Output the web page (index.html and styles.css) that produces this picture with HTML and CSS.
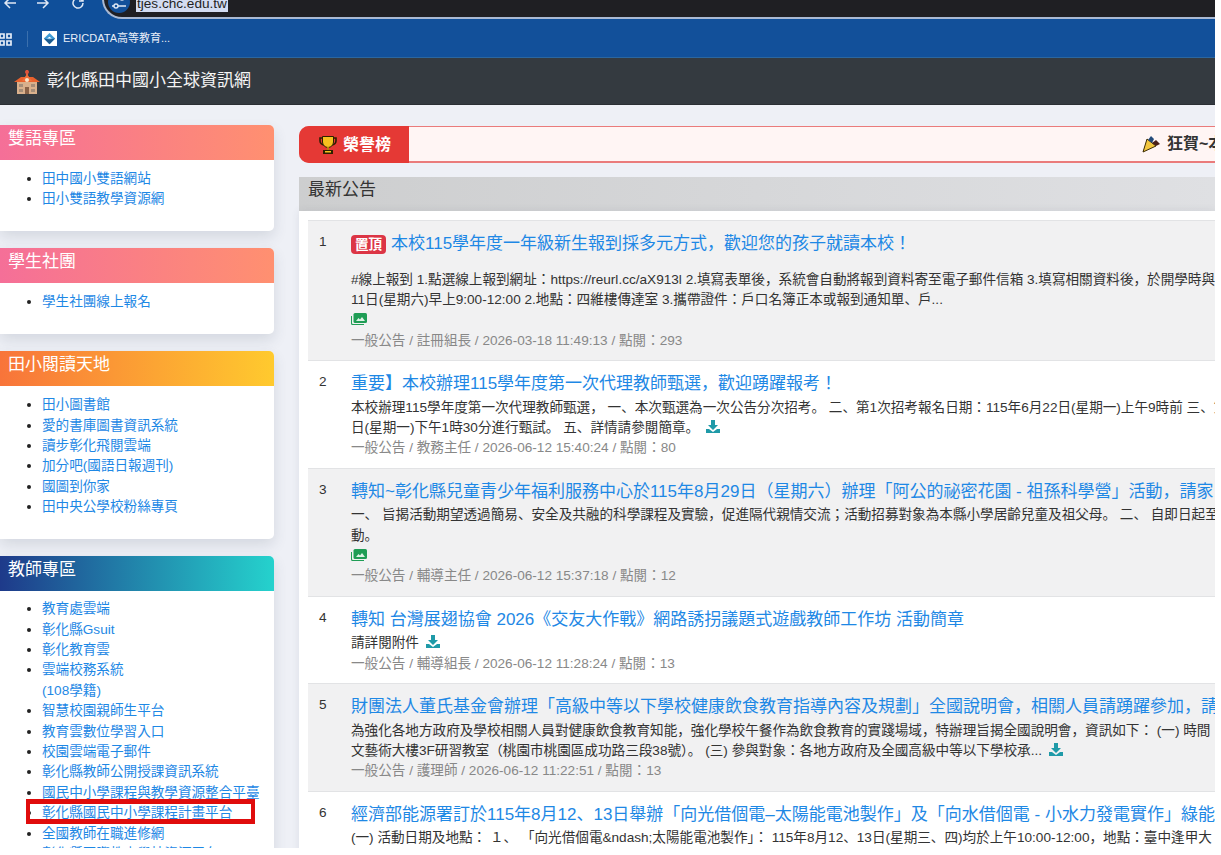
FILE: index.html
```html
<!DOCTYPE html>
<html lang="zh-Hant">
<head>
    <meta charset="utf-8">
    <title>彰化縣田中國小全球資訊網</title>
    <link rel="stylesheet" href="styles.css">
</head>
<body>
    <div class="shot">
        <!-- browser toolbar -->
        <div class="toolbar">
            <svg class="nav-icon back" viewBox="0 0 16 16"><path d="M14 8H3M8 3L3 8l5 5"/></svg>
            <svg class="nav-icon forward" viewBox="0 0 16 16"><path d="M2 8h11M8 3l5 5-5 5"/></svg>
            <svg class="nav-icon reload" viewBox="0 0 16 16"><path d="M13 8a5 5 0 1 1-1.500-3.500L13 6M13 2v4H9"/></svg>
            <div class="omnibox">
                <span class="site-icon">
                    <svg viewBox="0 0 16 16"><path d="M1 4h8M13 4h2M1 12h2M7 12h8"/><circle cx="11" cy="4" r="2"/><circle cx="5" cy="12" r="2"/></svg>
                </span>
                <span class="url">tjes.chc.edu.tw</span>
            </div>
        </div>
        <div class="bookmarks">
            <svg class="apps" viewBox="0 0 14 13"><path d="M1 1h4v4H1zM8 1h4v4H8zM1 8h4v4H1zM8 8h4v4H8z"/></svg>
            <span class="bm-sep"></span>
            <svg class="favicon" viewBox="0 0 16 16"><rect width="16" height="16" fill="#fff"/><path d="M8 2l6 6-6 6-6-6z" fill="#3f9bd6"/><path d="M2 8l6 1 6-1-6 6z" fill="#1c5a8e"/><path d="M8 6l2.500 2H5.500z" fill="#fff"/></svg>
            <span class="bm-text">ERICDATA高等教育...</span>
        </div>

        <nav class="navbar">
            <svg class="school" viewBox="0 0 26 24">
                <rect x="12" y="0" width="2" height="5" fill="#e2543a"/>
                <circle cx="13" cy="2" r="2" fill="#e2543a"/>
                <rect x="3" y="11" width="20" height="13" fill="#d9b08c"/>
                <path d="M0 12L7 7h12l7 5z" fill="#e8612c"/>
                <path d="M8 11l5-7 5 7z" fill="#ef6f3a"/>
                <circle cx="13" cy="10" r="2" fill="#f6e3c8"/>
                <rect x="11" y="17" width="4" height="7" fill="#8a6248"/>
                <path d="M5 14h4v3H5zM17 14h4v3h-4zM5 19h4v3H5zM17 19h4v3h-4z" fill="#a58d78"/>
            </svg>
            <span class="brand">彰化縣田中國小全球資訊網</span>
        </nav>

        <div class="layout">
            <aside class="sidebar">
                <section class="card">
                    <h3 class="card-title pink">雙語專區</h3>
                    <ul class="links">
                        <li><a href="#">田中國小雙語網站</a></li>
                        <li><a href="#">田小雙語教學資源網</a></li>
                    </ul>
                </section>
                <section class="card">
                    <h3 class="card-title pink">學生社團</h3>
                    <ul class="links">
                        <li><a href="#">學生社團線上報名</a></li>
                    </ul>
                </section>
                <section class="card">
                    <h3 class="card-title orange">田小閱讀天地</h3>
                    <ul class="links">
                        <li><a href="#">田小圖書館</a></li>
                        <li><a href="#">愛的書庫圖書資訊系統</a></li>
                        <li><a href="#">讀步彰化飛閱雲端</a></li>
                        <li><a href="#">加分吧(國語日報週刊)</a></li>
                        <li><a href="#">國圖到你家</a></li>
                        <li><a href="#">田中央公學校粉絲專頁</a></li>
                    </ul>
                </section>
                <section class="card">
                    <h3 class="card-title blue">教師專區</h3>
                    <ul class="links">
                        <li><a href="#">教育處雲端</a></li>
                        <li><a href="#">彰化縣Gsuit</a></li>
                        <li><a href="#">彰化教育雲</a></li>
                        <li><a href="#">雲端校務系統<br>(108學籍)</a></li>
                        <li><a href="#">智慧校園親師生平台</a></li>
                        <li><a href="#">教育雲數位學習入口</a></li>
                        <li><a href="#">校園雲端電子郵件</a></li>
                        <li><a href="#">彰化縣教師公開授課資訊系統</a></li>
                        <li><a href="#">國民中小學課程與教學資源整合平臺</a></li>
                        <li class="marked"><a href="#">彰化縣國民中小學課程計畫平台</a></li>
                        <li><a href="#">全國教師在職進修網</a></li>
                        <li><a href="#">彰化縣國際教育學校資源平台</a></li>
                    </ul>
                </section>
            </aside>

            <main class="content">
                <div class="honor">
                    <div class="honor-label">
                        <svg class="trophy" viewBox="0 0 18 18">
                            <path d="M4 2H1v3c0 2 2 4 4 4M14 2h3v3c0 2-2 4-4 4" fill="none" stroke="#2e2000" stroke-width="1.600"/>
                            <path d="M3.500 .5h11v5.500c0 3-2.500 5.500-5.500 5.500S3.500 9 3.500 6z" fill="#f7c11e" stroke="#2e2000"/>
                            <path d="M8 11h2v3H8z" fill="#b97f0c"/>
                            <path d="M4 14h10v4H4z" fill="#2e2000"/>
                            <path d="M6 15h6v1.500H6z" fill="#f7c11e"/>
                        </svg>
                        <span>榮譽榜</span>
                    </div>
                    <div class="honor-track">
                        <svg class="popper" viewBox="0 0 18 18">
                            <path d="M5 4l9 7-13 6z" fill="#f3c63f" stroke="#3a2a00"/>
                            <path d="M6 5l3-4 3 3-2 4z" fill="#234a7a"/>
                            <path d="M10 8l4-3 4 4-4 2z" fill="#4a2018"/>
                        </svg>
                        <span>狂賀~本校學生榮獲佳績</span>
                    </div>
                </div>

                <h2 class="panel-title">最新公告</h2>
                <div class="panel">
                    <article class="item shaded pinned">
                        <div class="num">1</div>
                        <div class="body">
                            <div class="title"><span class="badge">置頂</span><a href="#">本校115學年度一年級新生報到採多元方式，歡迎您的孩子就讀本校！</a></div>
                            <div class="line">#線上報到 1.點選線上報到網址：https://reurl.cc/aX913l 2.填寫表單後，系統會自動將報到資料寄至電子郵件信箱 3.填寫相關資料後，於開學時與</div>
                            <div class="line">11日(星期六)早上9:00-12:00 2.地點：四維樓傳達室 3.攜帶證件：戶口名簿正本或報到通知單、戶...</div>
                            <div class="line"><svg class="ico-img" viewBox="0 0 16 12"><path d="M4 0h10.500A1.500 1.500 0 0 1 16 1.500v7a1.500 1.500 0 0 1-1.500 1.500H4a1.500 1.500 0 0 1-1.500-1.500v-7A1.500 1.500 0 0 1 4 0z" fill="#1f9d55"/><path d="M5 8l2.500-3 1.500 1.500L11 4l3 4z" fill="#dff3e6"/><path d="M0 3v7.500A1.500 1.500 0 0 0 1.500 12H13v-1H2a1 1 0 0 1-1-1V3z" fill="#1f9d55"/></svg></div>
                            <div class="meta">一般公告 / 註冊組長 / 2026-03-18 11:49:13 / 點閱：293</div>
                        </div>
                    </article>
                    <article class="item">
                        <div class="num">2</div>
                        <div class="body">
                            <div class="title"><a href="#">重要】本校辦理115學年度第一次代理教師甄選，歡迎踴躍報考！</a></div>
                            <div class="line">本校辦理115學年度第一次代理教師甄選， 一、本次甄選為一次公告分次招考。 二、第1次招考報名日期：115年6月22日(星期一)上午9時前 三、第</div>
                            <div class="line">日(星期一)下午1時30分進行甄試。 五、詳情請參閱簡章。 <svg class="ico-dl" viewBox="0 0 14 13"><path d="M5 0h4v5h3L7 10 2 5h3z"/><path d="M0 9h3l4 3 4-3h3v4H0z"/></svg></div>
                            <div class="meta">一般公告 / 教務主任 / 2026-06-12 15:40:24 / 點閱：80</div>
                        </div>
                    </article>
                    <article class="item shaded">
                        <div class="num">3</div>
                        <div class="body">
                            <div class="title"><a href="#">轉知~彰化縣兒童青少年福利服務中心於115年8月29日（星期六）辦理「阿公的祕密花園 - 祖孫科學營」活動，請家</a></div>
                            <div class="line">一、 旨揭活動期望透過簡易、安全及共融的科學課程及實驗，促進隔代親情交流；活動招募對象為本縣小學居齡兒童及祖父母。 二、 自即日起至</div>
                            <div class="line">動。</div>
                            <div class="line"><svg class="ico-img" viewBox="0 0 16 12"><path d="M4 0h10.500A1.500 1.500 0 0 1 16 1.500v7a1.500 1.500 0 0 1-1.500 1.500H4a1.500 1.500 0 0 1-1.500-1.500v-7A1.500 1.500 0 0 1 4 0z" fill="#1f9d55"/><path d="M5 8l2.500-3 1.500 1.500L11 4l3 4z" fill="#dff3e6"/><path d="M0 3v7.500A1.500 1.500 0 0 0 1.500 12H13v-1H2a1 1 0 0 1-1-1V3z" fill="#1f9d55"/></svg></div>
                            <div class="meta">一般公告 / 輔導主任 / 2026-06-12 15:37:18 / 點閱：12</div>
                        </div>
                    </article>
                    <article class="item">
                        <div class="num">4</div>
                        <div class="body">
                            <div class="title"><a href="#">轉知 台灣展翅協會 2026《交友大作戰》網路誘拐議題式遊戲教師工作坊 活動簡章</a></div>
                            <div class="line">請詳閱附件 <svg class="ico-dl" viewBox="0 0 14 13"><path d="M5 0h4v5h3L7 10 2 5h3z"/><path d="M0 9h3l4 3 4-3h3v4H0z"/></svg></div>
                            <div class="meta">一般公告 / 輔導組長 / 2026-06-12 11:28:24 / 點閱：13</div>
                        </div>
                    </article>
                    <article class="item shaded">
                        <div class="num">5</div>
                        <div class="body">
                            <div class="title"><a href="#">財團法人董氏基金會辦理「高級中等以下學校健康飲食教育指導內容及規劃」全國說明會，相關人員請踴躍參加，請</a></div>
                            <div class="line">為強化各地方政府及學校相關人員對健康飲食教育知能，強化學校午餐作為飲食教育的實踐場域，特辦理旨揭全國說明會，資訊如下： (一) 時間：</div>
                            <div class="line">文藝術大樓3F研習教室（桃園市桃園區成功路三段38號）。 (三) 參與對象：各地方政府及全國高級中等以下學校承... <svg class="ico-dl" viewBox="0 0 14 13"><path d="M5 0h4v5h3L7 10 2 5h3z"/><path d="M0 9h3l4 3 4-3h3v4H0z"/></svg></div>
                            <div class="meta">一般公告 / 護理師 / 2026-06-12 11:22:51 / 點閱：13</div>
                        </div>
                    </article>
                    <article class="item">
                        <div class="num">6</div>
                        <div class="body">
                            <div class="title"><a href="#">經濟部能源署訂於115年8月12、13日舉辦「向光借個電–太陽能電池製作」及「向水借個電 - 小水力發電實作」綠能</a></div>
                            <div class="line">(一) 活動日期及地點： １、 「向光借個電&amp;ndash;太陽能電池製作」： 115年8月12、13日(星期三、四)均於上午10:00-12:00，地點：臺中逢甲大</div>
                        </div>
                    </article>
                </div>
            </main>
        </div>
    </div>
</body>
</html>
```

FILE: styles.css
```css
body {
    margin: 0;
    background-color: white;
    font-family: "Liberation Sans", "Noto Sans CJK JP", "Noto Sans CJK TC", sans-serif;
    /* keep the low-left commas and colons of the reference */
    font-feature-settings: "locl" 0;
    font-size: 13.6px;
    line-height: 1.5;
    color: #333;
}

a {
    color: #1e88e5;
    text-decoration: none;
}

/* the screenshot stops short of the window on the right and at the bottom */
.shot {
    width: 1215px;
    height: 848px;
    overflow: hidden;
    background-color: #eef0f6;
}

.toolbar {
    height: 20px;
    display: flex;
    align-items: flex-end;
    background-color: #0f4f9a;
    overflow: hidden;
}

.nav-icon {
    width: 16px;
    height: 16px;
    flex: none;
    margin-bottom: 9px;
    fill: none;
    stroke: #dfe8f5;
    stroke-width: 1.5;
}

.back { margin-left: 2px; }
.forward { margin-left: 17px; }
.reload { margin-left: 19px; }

.omnibox {
    flex: none;
    width: 1140px;
    height: 40px;
    margin-left: 16px;
    margin-bottom: 1px;
    padding-left: 4px;
    box-sizing: border-box;
    display: flex;
    align-items: flex-end;
    background-color: #1f1f23;
    border: 2px solid #a9b9d3;
    border-right: none;
    border-radius: 22px 0 0 22px;
}

.site-icon {
    width: 22px;
    height: 22px;
    flex: none;
    margin-bottom: 4px;
    display: flex;
    align-items: center;
    justify-content: center;
    background-color: #12509a;
    border-radius: 50%;
}

.site-icon svg {
    width: 16px;
    height: 16px;
    fill: none;
    stroke: #dfe8f5;
    stroke-width: 1.4;
}

.url {
    margin-left: 6px;
    margin-bottom: 5px;
    padding: 0 1px;
    font-size: 13.6px;
    line-height: 16px;
    color: #1f1f23;
    background-color: #d3dcf2;
}

.bookmarks {
    height: 37px;
    display: flex;
    align-items: center;
    background-color: #12509a;
    border-bottom: 1px solid #2b669f;
}

.apps {
    width: 14px;
    height: 13px;
    margin-left: -1px;
    margin-top: 1px;
    fill: none;
    stroke: #e6edf7;
    stroke-width: 1.7;
}

.bm-sep {
    width: 1px;
    height: 16px;
    margin-left: 14px;
    background-color: #3b70ad;
}

.favicon {
    width: 15px;
    height: 15px;
    margin-left: 14px;
}

.bm-text {
    margin-left: 6px;
    font-size: 11px;
    color: #e8eef8;
}

.navbar {
    height: 46px;
    display: flex;
    align-items: center;
    padding-left: 14px;
    background-color: #343a40;
    border-bottom: 1px solid #2b2f34;
}

.school {
    width: 26px;
    height: 24px;
    margin-top: 2px;
}

.brand {
    margin-left: 7px;
    font-size: 17px;
    color: #f4f4f4;
}

.layout {
    display: flex;
    gap: 25px;
    padding-top: 20px;
}

.sidebar {
    width: 274px;
    flex: none;
    display: flex;
    flex-direction: column;
    gap: 17px;
}

.card {
    background-color: white;
    border-radius: 0 5px 5px 0;
    box-shadow: 0 6px 14px rgba(60,70,90,0.14);
}

.card-title {
    height: 35px;
    margin: 0;
    padding: 0 8px;
    box-sizing: border-box;
    font-size: 17px;
    font-weight: normal;
    line-height: 28px;
    color: white;
    border-radius: 0 5px 0 0;
}

.pink { background: linear-gradient(90deg, #f56f98, #ff9070); }
.orange { background: linear-gradient(90deg, #f8743a, #ffca2e); }
.blue { background: linear-gradient(90deg, #1e3a8a, #25d2cd); }

.links {
    margin: 0;
    padding: 9px 0 21.5px 42px;
    line-height: 20.4px;
}

.card:last-child .links {
    padding-top: 8px;
}

.links li::marker {
    color: #222;
}

.marked {
    position: relative;
}

.marked::after {
    content: "";
    position: absolute;
    left: -16px;
    top: -4px;
    width: 229px;
    height: 25px;
    box-sizing: border-box;
    border: 5px solid #e00c0c;
    border-left-width: 4px;
    border-right-width: 4px;
}

.content {
    flex: 1;
    min-width: 0;
    padding-top: 1px;
}

.honor {
    height: 37px;
    margin-bottom: 14px;
    display: flex;
    box-sizing: border-box;
    background-color: #fff5f4;
    border: 1px solid #ea7b7b;
    border-right: none;
    border-bottom-width: 2px;
    border-radius: 10px 0 0 10px;
}

.honor-label {
    width: 110px;
    flex: none;
    margin: -1px 0 -2px -1px;
    display: flex;
    align-items: center;
    gap: 6px;
    padding-left: 20px;
    box-sizing: border-box;
    background-color: #e53935;
    border-radius: 10px 0 0 10px;
    font-size: 16px;
    font-weight: bold;
    color: white;
}

.trophy, .popper {
    width: 18px;
    height: 18px;
    flex: none;
}

.honor-track {
    flex: 1;
    display: flex;
    align-items: center;
    gap: 7px;
    padding-left: 733px;
    white-space: nowrap;
    overflow: hidden;
    font-size: 16px;
    font-weight: bold;
    color: #333;
}

.panel-title {
    height: 34px;
    margin: 0;
    padding: 0 9px;
    box-sizing: border-box;
    font-size: 17px;
    font-weight: normal;
    line-height: 25px;
    color: #333;
    background: linear-gradient(90deg, #cdcecf, #dfe0e3);
}

.panel {
    padding: 9px 0 0 9px;
    background-color: white;
    box-shadow: 0 0 8px rgba(60,70,90,0.1);
}

.item {
    display: flex;
    padding: 10px 0 9px 11px;
    border-top: 1px solid #e2e3e5;
    white-space: nowrap;
}

.shaded {
    background-color: #f1f1f2;
}

.num {
    width: 32px;
    flex: none;
    line-height: 22px;
    color: #333;
}

.title {
    font-size: 17px;
    line-height: 26.5px;
}

.pinned .title {
    margin-bottom: 12px;
}

.badge {
    display: inline-block;
    width: 35px;
    height: 19px;
    margin-right: 5px;
    background-color: #dc3545;
    border-radius: 4px;
    font-size: 13.6px;
    font-weight: bold;
    line-height: 19px;
    text-align: center;
    color: white;
}

.line {
    height: 20.4px;
    line-height: 20.4px;
}

.meta {
    line-height: 20.4px;
    color: #888;
}

.ico-img {
    width: 16px;
    height: 12px;
    vertical-align: -1px;
}

.ico-dl {
    width: 14px;
    height: 13px;
    margin-left: 3px;
    vertical-align: -1px;
    fill: #1f9aa8;
}
```
